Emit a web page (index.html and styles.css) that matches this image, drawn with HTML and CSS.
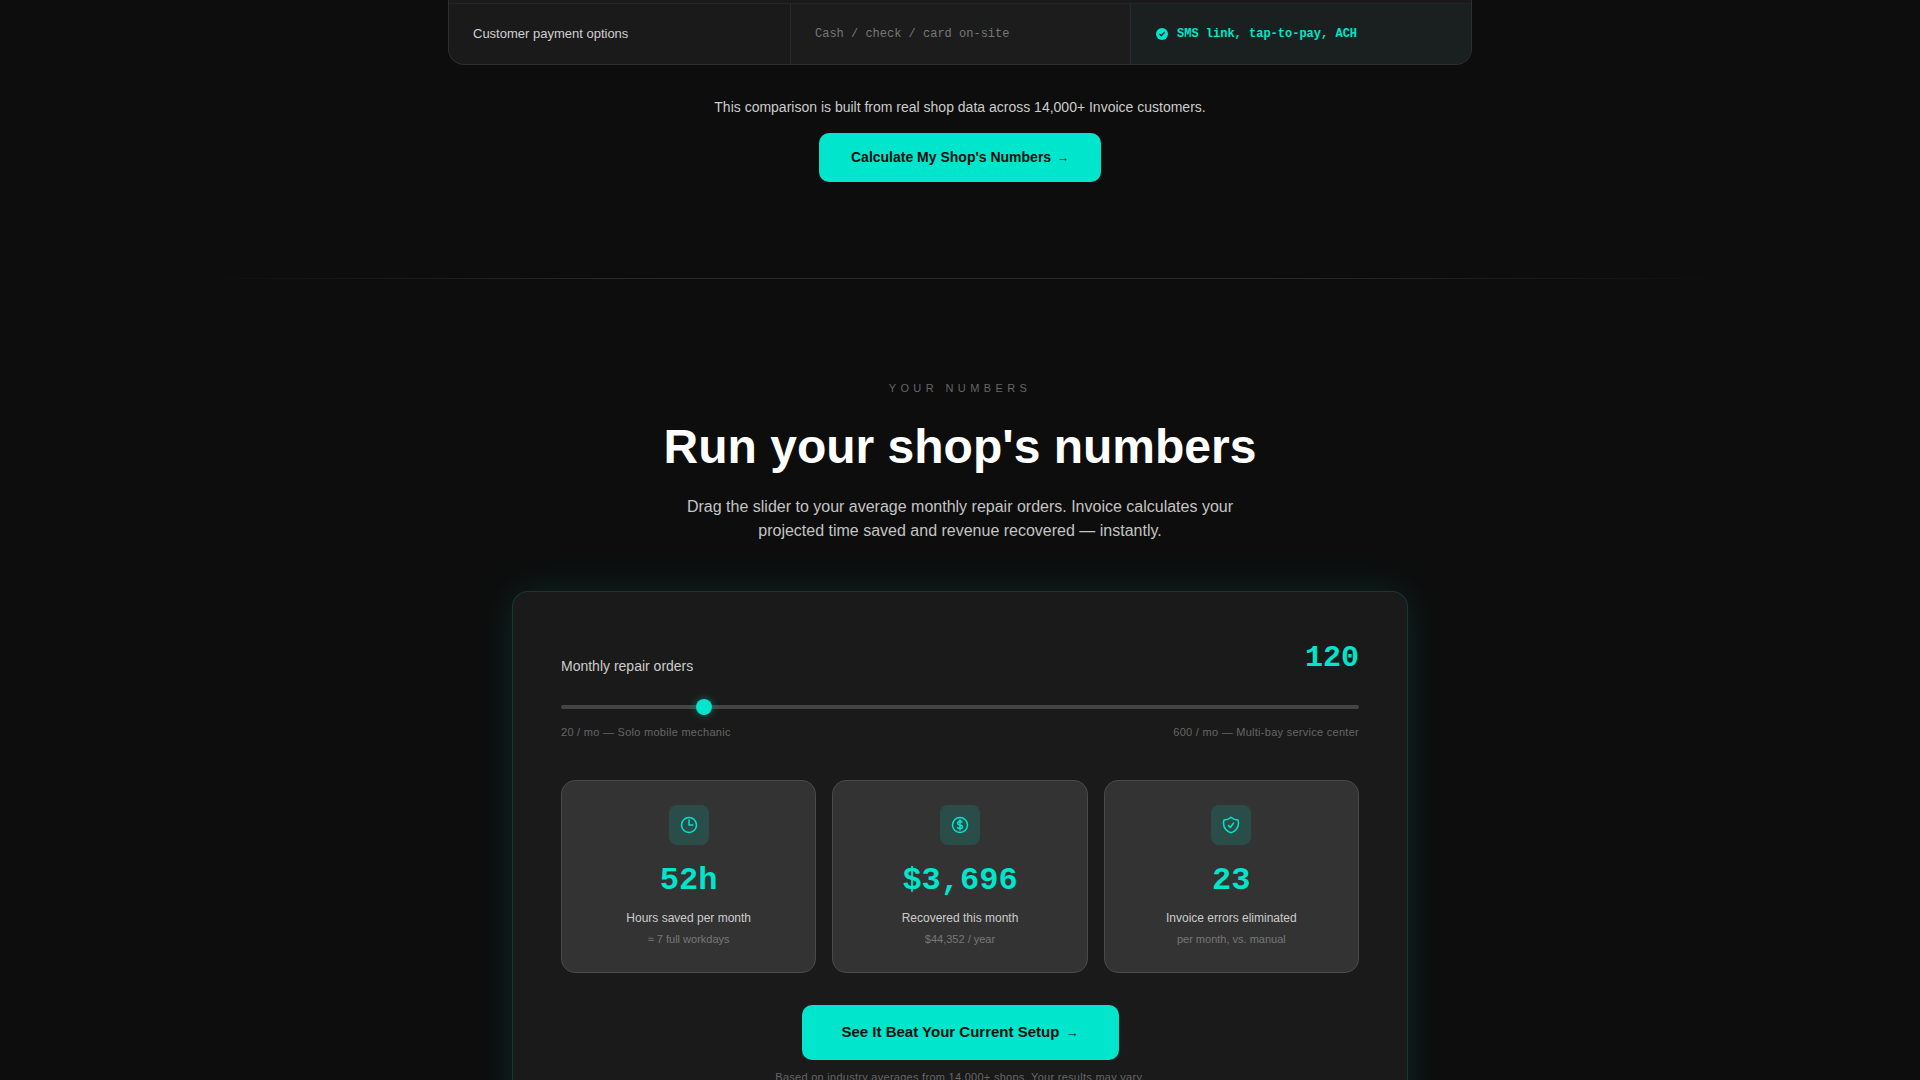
FILE: index.html
```html
<!DOCTYPE html>
<html lang="en">
<head>
  <meta charset="UTF-8">
  <meta name="viewport" content="width=device-width, initial-scale=1.0">
  <link rel="stylesheet" href="styles.css">
  <title>Invoice - Run your shop's numbers</title>
</head>
<body>
  <section class="compare">
    <div class="compare-table">
      <div class="compare-row">
        <div class="cell cell-label">Customer payment options</div>
        <div class="cell cell-old">Cash / check / card on-site</div>
        <div class="cell cell-new">
          <svg class="check" viewBox="0 0 24 24">
            <circle cx="12" cy="12" r="12" fill="#00e5cc"/>
            <path d="M7.5 12.5l3 3 6-6.5" fill="none" stroke="#1a2020" stroke-width="2.4" stroke-linecap="round" stroke-linejoin="round"/>
          </svg>
          SMS link, tap-to-pay, ACH
        </div>
      </div>
    </div>
    <p class="compare-note">This comparison is built from real shop data across 14,000+ Invoice customers.</p>
    <a class="btn btn-small" href="#numbers">Calculate My Shop's Numbers <span class="arrow">→</span></a>
  </section>

  <div class="divider"></div>

  <section class="numbers" id="numbers">
    <div class="eyebrow">YOUR NUMBERS</div>
    <h1>Run your shop's numbers</h1>
    <p class="lead">Drag the slider to your average monthly repair orders. Invoice calculates your projected time saved and revenue recovered — instantly.</p>

    <div class="calc">
      <div class="calc-head">
        <label for="orders">Monthly repair orders</label>
        <span class="calc-value">120</span>
      </div>
      <input type="range" id="orders" min="20" max="600" value="120">
      <div class="range-labels">
        <span>20 / mo — Solo mobile mechanic</span>
        <span>600 / mo — Multi-bay service center</span>
      </div>

      <div class="stats">
        <div class="stat">
          <div class="stat-icon">
            <svg viewBox="0 0 24 24"><path d="M12 6v6h4.5m4.5 0a9 9 0 1 1-18 0 9 9 0 0 1 18 0z"/></svg>
          </div>
          <div class="stat-value">52h</div>
          <div class="stat-label">Hours saved per month</div>
          <div class="stat-sub">≈ 7 full workdays</div>
        </div>
        <div class="stat">
          <div class="stat-icon">
            <svg viewBox="0 0 24 24"><path d="M12 6v12m-3-2.818l.879.659c1.171.879 3.07.879 4.242 0 1.172-.879 1.172-2.303 0-3.182C13.536 12.219 12.768 12 12 12c-.725 0-1.45-.22-2.003-.659-1.106-.879-1.106-2.303 0-3.182s2.9-.879 4.006 0l.415.33M21 12a9 9 0 1 1-18 0 9 9 0 0 1 18 0z"/></svg>
          </div>
          <div class="stat-value">$3,696</div>
          <div class="stat-label">Recovered this month</div>
          <div class="stat-sub">$44,352 / year</div>
        </div>
        <div class="stat">
          <div class="stat-icon">
            <svg viewBox="0 0 24 24"><path d="M9 12.75L11.25 15 15 9.75m-3-7.036A11.959 11.959 0 0 1 3.598 6 11.99 11.99 0 0 0 3 9.749c0 5.592 3.824 10.29 9 11.623 5.176-1.332 9-6.03 9-11.622 0-1.31-.21-2.571-.598-3.751h-.152c-3.196 0-6.1-1.248-8.25-3.286z"/></svg>
          </div>
          <div class="stat-value">23</div>
          <div class="stat-label">Invoice errors eliminated</div>
          <div class="stat-sub">per month, vs. manual</div>
        </div>
      </div>

      <div class="calc-cta">
        <a class="btn btn-large" href="#compare">See It Beat Your Current Setup <span class="arrow">→</span></a>
      </div>
      <p class="calc-note">Based on industry averages from 14,000+ shops. Your results may vary.</p>
    </div>
  </section>
</body>
</html>
```

FILE: styles.css
```css
html, body {
  height: 100%;
  overflow: hidden;
}

body {
  margin: 0;
  background-color: #0d0d0d;
  color: #fff;
  font-family: 'Liberation Sans', Arial, sans-serif;
}

a {
  text-decoration: none;
}

.compare {
  display: flex;
  flex-direction: column;
  align-items: center;
}

.compare-table {
  width: 1024px;
  box-sizing: border-box;
  background-color: #1a1a1a;
  border: 1px solid #2e2e2e;
  border-top: none;
  border-radius: 0 0 16px 16px;
  overflow: hidden;
  padding-top: 3px;
}

.compare-row {
  display: grid;
  grid-template-columns: 342px 340px 1fr;
  border-top: 1px solid #242424;
  height: 60px;
}

.cell {
  display: flex;
  align-items: center;
  padding: 0 24px;
  border-right: 1px solid #2a2a2a;
}

.cell-label {
  font-size: 13px;
  color: #d0d0d0;
  padding-bottom: 2px;
}

.cell-old {
  font-family: 'Liberation Mono', monospace;
  font-size: 12px;
  color: #777;
  background-color: #1c1c1c;
}

.cell-new {
  padding-left: 25px;
  font-family: 'Liberation Mono', monospace;
  font-size: 12px;
  font-weight: 700;
  color: #00e5cc;
  background-color: #1a2020;
  border-right: none;
}

.check {
  width: 12px;
  height: 12px;
  margin-right: 9px;
  flex-shrink: 0;
}

.compare-note {
  margin: 33px 0 0;
  font-size: 14px;
  line-height: 18px;
  color: #ccc;
}

.btn {
  display: inline-block;
  box-sizing: border-box;
  background-color: #00e5cc;
  color: #0d0d0d;
  font-weight: 700;
  text-align: center;
}

.arrow {
  margin-left: 0.15em;
  font-size: 0.87em;
  font-weight: 400;
  line-height: 1;
}

.btn-small {
  margin-top: 17px;
  padding: 16px 32px;
  font-size: 14px;
  line-height: 17px;
  border-radius: 10px;
}

.btn-large {
  padding: 18px 40px 20px;
  font-size: 15px;
  line-height: 17px;
  border-radius: 10px;
}

.divider {
  height: 1px;
  margin: 96px auto 0;
  width: 1536px;
  background: linear-gradient(90deg, transparent, #2a2a2a 30%, #2a2a2a 70%, transparent);
}

.numbers {
  display: flex;
  flex-direction: column;
  align-items: center;
  padding-top: 102px;
}

.eyebrow {
  font-size: 11px;
  line-height: 14px;
  letter-spacing: 0.4em;
  color: #666;
}

h1 {
  margin: 23px 0 0;
  font-size: 48px;
  line-height: 58px;
  font-weight: 700;
}

.lead {
  width: 576px;
  margin: 19px 0 0;
  font-size: 16px;
  line-height: 24px;
  text-align: center;
  color: #c4c4c4;
}

.calc {
  width: 896px;
  margin-top: 48px;
  box-sizing: border-box;
  padding: 48px;
  background-color: #1a1a1a;
  border: 1px solid rgba(0, 229, 204, 0.15);
  border-radius: 16px;
  box-shadow: 0 0 40px rgba(0, 229, 204, 0.12);
}

.calc-head {
  display: flex;
  justify-content: space-between;
  align-items: flex-end;
}

.calc-head label {
  font-size: 14px;
  line-height: 20px;
  color: #ccc;
}

.calc-value {
  font-family: 'Liberation Mono', monospace;
  font-size: 30px;
  line-height: 36px;
  font-weight: 700;
  color: #00e5cc;
}

input[type="range"] {
  display: block;
  width: 100%;
  height: 16px;
  margin: 23px 0 0;
  background: transparent;
  -webkit-appearance: none;
  appearance: none;
}

input[type="range"]::-webkit-slider-runnable-track {
  height: 4px;
  background-color: #444;
  border-radius: 2px;
}

input[type="range"]::-webkit-slider-thumb {
  -webkit-appearance: none;
  width: 16px;
  height: 16px;
  margin-top: -6px;
  border-radius: 50%;
  background-color: #00e5cc;
  box-shadow: 0 0 8px rgba(0, 229, 204, 0.4);
}

.range-labels {
  display: flex;
  justify-content: space-between;
  margin-top: 10px;
  font-size: 11px;
  line-height: 14px;
  letter-spacing: 0.025em;
  color: #666;
}

.stats {
  display: grid;
  grid-template-columns: repeat(3, 1fr);
  gap: 16px;
  margin-top: 41px;
}

.stat {
  display: flex;
  flex-direction: column;
  align-items: center;
  padding: 24px 16px;
  height: 193px;
  box-sizing: border-box;
  background-color: #333;
  border: 1px solid #4a4a4a;
  border-radius: 14px;
}

.stat-icon {
  display: flex;
  align-items: center;
  justify-content: center;
  width: 40px;
  height: 40px;
  border-radius: 8px;
  background-color: rgba(0, 229, 204, 0.15);
}

.stat-icon svg {
  width: 20px;
  height: 20px;
  fill: none;
  stroke: #00e5cc;
  stroke-width: 1.8;
  stroke-linecap: round;
  stroke-linejoin: round;
}

.stat-value {
  margin-top: 18px;
  font-family: 'Liberation Mono', monospace;
  font-size: 32px;
  line-height: 36px;
  font-weight: 700;
  color: #00e5cc;
}

.stat-label {
  margin-top: 11px;
  font-size: 12px;
  line-height: 16px;
  color: #ccc;
}

.stat-sub {
  margin-top: 6px;
  font-size: 11px;
  line-height: 14px;
  color: #777;
}

.calc-cta {
  display: flex;
  justify-content: center;
  margin-top: 32px;
}

.calc-note {
  margin: 10px 0 0;
  font-size: 11px;
  line-height: 14px;
  letter-spacing: 0.025em;
  text-align: center;
  color: #666;
}
```
